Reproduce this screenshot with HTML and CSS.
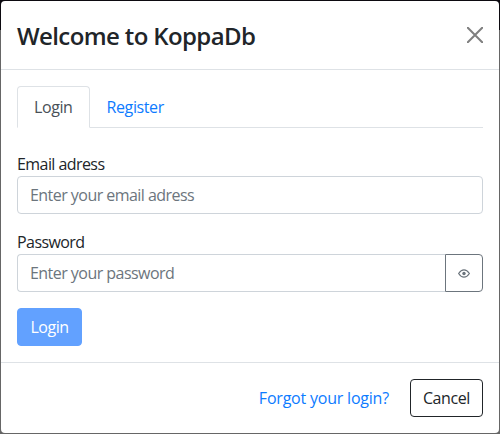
FILE: index.html
```html
<!DOCTYPE html>
<html lang="en">
<head>
<meta charset="utf-8">
<title>KoppaDb</title>
<link rel="stylesheet" href="styles.css">
</head>
<body>
<main class="modal">
  <header class="modal-header">
    <h1 class="modal-title">Welcome to KoppaDb</h1>
    <button class="close" aria-label="Close"><svg width="16" height="16" viewBox="0 0 16 16"><path d="M.8.8l14.400 14.400M15.200.8L.8 15.200" stroke="currentColor" stroke-width="2" stroke-linecap="round"/></svg></button>
  </header>
  <section class="modal-body">
    <nav class="tabs"><a class="tab active">Login</a><a class="tab">Register</a></nav>
    <form class="form">
      <label class="label">Email adress</label>
      <div class="group"><div class="input">Enter your email adress</div></div>
      <label class="label">Password</label>
      <div class="group"><div class="input joined">Enter your password</div><button type="button" class="eye" aria-label="Show password"><svg width="12" height="9" viewBox="0 0 12 9"><path d="M.6 4.500Q3 .8 6 .8t5.400 3.700Q9 8.200 6 8.200T.6 4.500z" fill="none" stroke="currentColor" stroke-width="1.200"/><circle cx="6" cy="4.500" r="1.700" fill="currentColor"/></svg></button></div>
      <button type="button" class="btn primary">Login</button>
    </form>
  </section>
  <footer class="modal-footer"><a class="forgot">Forgot your login?</a><button class="btn cancel">Cancel</button></footer>
</main>
</body>
</html>
```
FILE: styles.css
```css
* { box-sizing: border-box; }
body { margin: 0; padding: 1px; height: 434px; background: linear-gradient(#0c0a10 30px, #666 30px); font: 16px/24px "Open Sans", "Noto Sans", sans-serif; color: #212529; }
button { font: inherit; }
.modal { width: 498px; height: 432px; background: #fff; border-radius: 4px; overflow: hidden; white-space: nowrap; }
.modal-header { height: 69px; border-bottom: 1px solid #dee2e6; display: flex; align-items: center; justify-content: space-between; padding: 0 16px; }
.modal-title { margin: 0; padding-top: 2px; font-size: 24px; line-height: 36px; font-weight: 600; letter-spacing: -.62px; }
.close { border: 0; background: none; padding: 0; color: #7f7f7f; display: flex; }
.modal-body { padding: 16px; height: 292px; }
.tabs { display: flex; border-bottom: 1px solid #dee2e6; height: 42px; }
.tab { height: 42px; padding: 9px 17px; color: #0d7bff; letter-spacing: -.4px; }
.active { color: #495057; background: #fff; border: 1px solid #dee2e6; border-bottom-color: #fff; border-radius: 4px 4px 0 0; padding: 8px 16px; }
.form { padding-top: 24px; letter-spacing: -.57px; }
.label { display: block; height: 24px; }
.group { display: flex; height: 38px; margin-bottom: 16px; }
.input { flex: 1; border: 1px solid #ced4da; border-radius: 4px; padding: 6px 12px; color: #6c757d; letter-spacing: -.54px; }
.joined { border-radius: 4px 0 0 4px; border-right: 0; }
.eye { width: 38px; border: 1px solid #6c757d; border-radius: 0 4px 4px 0; background: #fff; padding: 0 1px 0 0; color: #6c757d; display: flex; align-items: center; justify-content: center; }
.btn { height: 38px; border-radius: 4px; padding: 6px 12px; border: 1px solid #212529; background: #fff; color: #212529; letter-spacing: -.4px; }
.primary { width: 65px; background: #62a1ff; border-color: #62a1ff; color: #fff; font-weight: 500; letter-spacing: -.5px; }
.modal-footer { border-top: 1px solid #dee2e6; height: 71px; display: flex; justify-content: flex-end; align-items: center; padding: 0 16px; gap: 21px; }
.forgot { color: #0d7bff; letter-spacing: -.21px; }
```
